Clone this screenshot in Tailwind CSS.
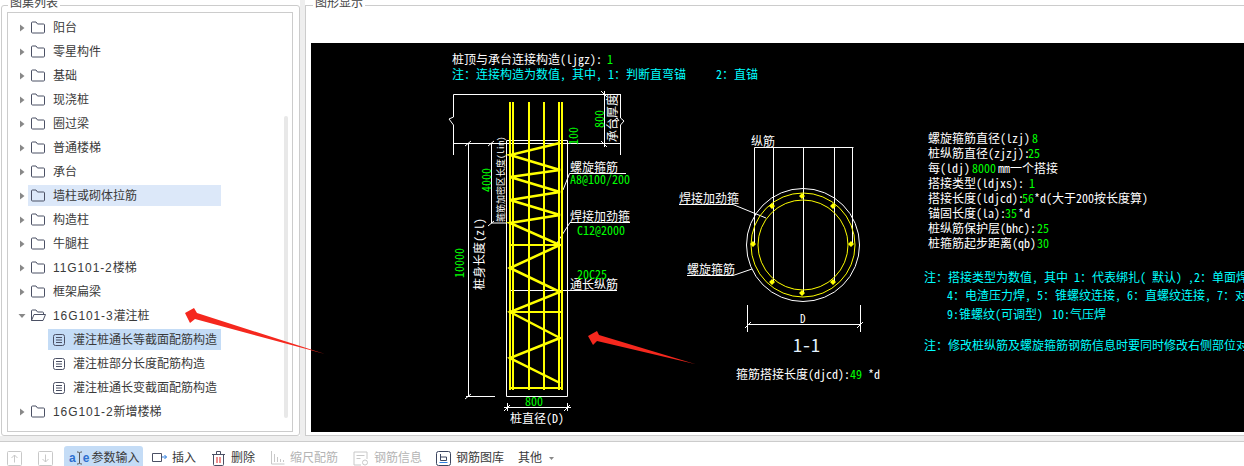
<!DOCTYPE html>
<html>
<head>
<meta charset="UTF-8">
<script src="https://cdn.jsdelivr.net/npm/@tailwindcss/browser@4"></script>
</head>
<body class="m-0 overflow-hidden">
<div class="relative w-[1244px] h-[466px] bg-[#eeeeee] overflow-hidden font-['Liberation_Sans','Noto_Sans_CJK_SC',sans-serif] text-[12px] text-[#3a3a3a]">
  <div class="h-[441px] flex">
    <!-- left panel -->
    <div class="relative w-[300px] h-[436px] bg-white pt-[5px] pl-[1px]">
      <span class="absolute left-[8px] -top-[4px] px-[2px] bg-white leading-[14px] text-[#444]">图集列表</span>
      <div class="w-[299px] h-[431px] border border-[#ccc] rounded-[3px] pt-[6px] pl-[5px]">
        <div class="relative w-[286px] h-[420px] border border-[#ccc] pt-[2.5px] pl-[10px]">
          <div class="absolute right-[4px] top-[103px] w-[4px] h-[302px] bg-[#e8e8e8] rounded-[2px]"></div>

          <div class="flex items-center h-[24px]"><svg class="w-[10px] h-[10px]" viewBox="0 0 10 10"><path d="M2 1.500l4.500 3.500-4.500 3.500z" fill="#888"/></svg><svg class="w-[14px] h-[13px] ml-[3px]" viewBox="0 0 14 13" fill="none" stroke="#4b5064"><path d="M.5 11V2a1 1 0 0 1 1-1h3.500l1.500 2h6a1 1 0 0 1 1 1v7a1 1 0 0 1-1 1h-11a1 1 0 0 1-1-1z"/></svg><span class="ml-[8px]">阳台</span></div>
          <div class="flex items-center h-[24px]"><svg class="w-[10px] h-[10px]" viewBox="0 0 10 10"><path d="M2 1.500l4.500 3.500-4.500 3.500z" fill="#888"/></svg><svg class="w-[14px] h-[13px] ml-[3px]" viewBox="0 0 14 13" fill="none" stroke="#4b5064"><path d="M.5 11V2a1 1 0 0 1 1-1h3.500l1.500 2h6a1 1 0 0 1 1 1v7a1 1 0 0 1-1 1h-11a1 1 0 0 1-1-1z"/></svg><span class="ml-[8px]">零星构件</span></div>
          <div class="flex items-center h-[24px]"><svg class="w-[10px] h-[10px]" viewBox="0 0 10 10"><path d="M2 1.500l4.500 3.500-4.500 3.500z" fill="#888"/></svg><svg class="w-[14px] h-[13px] ml-[3px]" viewBox="0 0 14 13" fill="none" stroke="#4b5064"><path d="M.5 11V2a1 1 0 0 1 1-1h3.500l1.500 2h6a1 1 0 0 1 1 1v7a1 1 0 0 1-1 1h-11a1 1 0 0 1-1-1z"/></svg><span class="ml-[8px]">基础</span></div>
          <div class="flex items-center h-[24px]"><svg class="w-[10px] h-[10px]" viewBox="0 0 10 10"><path d="M2 1.500l4.500 3.500-4.500 3.500z" fill="#888"/></svg><svg class="w-[14px] h-[13px] ml-[3px]" viewBox="0 0 14 13" fill="none" stroke="#4b5064"><path d="M.5 11V2a1 1 0 0 1 1-1h3.500l1.500 2h6a1 1 0 0 1 1 1v7a1 1 0 0 1-1 1h-11a1 1 0 0 1-1-1z"/></svg><span class="ml-[8px]">现浇桩</span></div>
          <div class="flex items-center h-[24px]"><svg class="w-[10px] h-[10px]" viewBox="0 0 10 10"><path d="M2 1.500l4.500 3.500-4.500 3.500z" fill="#888"/></svg><svg class="w-[14px] h-[13px] ml-[3px]" viewBox="0 0 14 13" fill="none" stroke="#4b5064"><path d="M.5 11V2a1 1 0 0 1 1-1h3.500l1.500 2h6a1 1 0 0 1 1 1v7a1 1 0 0 1-1 1h-11a1 1 0 0 1-1-1z"/></svg><span class="ml-[8px]">圈过梁</span></div>
          <div class="flex items-center h-[24px]"><svg class="w-[10px] h-[10px]" viewBox="0 0 10 10"><path d="M2 1.500l4.500 3.500-4.500 3.500z" fill="#888"/></svg><svg class="w-[14px] h-[13px] ml-[3px]" viewBox="0 0 14 13" fill="none" stroke="#4b5064"><path d="M.5 11V2a1 1 0 0 1 1-1h3.500l1.500 2h6a1 1 0 0 1 1 1v7a1 1 0 0 1-1 1h-11a1 1 0 0 1-1-1z"/></svg><span class="ml-[8px]">普通楼梯</span></div>
          <div class="flex items-center h-[24px]"><svg class="w-[10px] h-[10px]" viewBox="0 0 10 10"><path d="M2 1.500l4.500 3.500-4.500 3.500z" fill="#888"/></svg><svg class="w-[14px] h-[13px] ml-[3px]" viewBox="0 0 14 13" fill="none" stroke="#4b5064"><path d="M.5 11V2a1 1 0 0 1 1-1h3.500l1.500 2h6a1 1 0 0 1 1 1v7a1 1 0 0 1-1 1h-11a1 1 0 0 1-1-1z"/></svg><span class="ml-[8px]">承台</span></div>
          <div class="flex items-center h-[24px]"><svg class="w-[10px] h-[10px]" viewBox="0 0 10 10"><path d="M2 1.500l4.500 3.500-4.500 3.500z" fill="#888"/></svg><div class="flex items-center w-[193px] h-[21px] bg-[#dce8f9]"><svg class="w-[14px] h-[13px] ml-[3px]" viewBox="0 0 14 13" fill="none" stroke="#4b5064"><path d="M.5 11V2a1 1 0 0 1 1-1h3.500l1.500 2h6a1 1 0 0 1 1 1v7a1 1 0 0 1-1 1h-11a1 1 0 0 1-1-1z"/></svg><span class="ml-[8px]">墙柱或砌体拉筋</span></div></div>
          <div class="flex items-center h-[24px]"><svg class="w-[10px] h-[10px]" viewBox="0 0 10 10"><path d="M2 1.500l4.500 3.500-4.500 3.500z" fill="#888"/></svg><svg class="w-[14px] h-[13px] ml-[3px]" viewBox="0 0 14 13" fill="none" stroke="#4b5064"><path d="M.5 11V2a1 1 0 0 1 1-1h3.500l1.500 2h6a1 1 0 0 1 1 1v7a1 1 0 0 1-1 1h-11a1 1 0 0 1-1-1z"/></svg><span class="ml-[8px]">构造柱</span></div>
          <div class="flex items-center h-[24px]"><svg class="w-[10px] h-[10px]" viewBox="0 0 10 10"><path d="M2 1.500l4.500 3.500-4.500 3.500z" fill="#888"/></svg><svg class="w-[14px] h-[13px] ml-[3px]" viewBox="0 0 14 13" fill="none" stroke="#4b5064"><path d="M.5 11V2a1 1 0 0 1 1-1h3.500l1.500 2h6a1 1 0 0 1 1 1v7a1 1 0 0 1-1 1h-11a1 1 0 0 1-1-1z"/></svg><span class="ml-[8px]">牛腿柱</span></div>
          <div class="flex items-center h-[24px]"><svg class="w-[10px] h-[10px]" viewBox="0 0 10 10"><path d="M2 1.500l4.500 3.500-4.500 3.500z" fill="#888"/></svg><svg class="w-[14px] h-[13px] ml-[3px]" viewBox="0 0 14 13" fill="none" stroke="#4b5064"><path d="M.5 11V2a1 1 0 0 1 1-1h3.500l1.500 2h6a1 1 0 0 1 1 1v7a1 1 0 0 1-1 1h-11a1 1 0 0 1-1-1z"/></svg><span class="ml-[8px]"><span class="tracking-[0.9px]">11G101-2</span>楼梯</span></div>
          <div class="flex items-center h-[24px]"><svg class="w-[10px] h-[10px]" viewBox="0 0 10 10"><path d="M2 1.500l4.500 3.500-4.500 3.500z" fill="#888"/></svg><svg class="w-[14px] h-[13px] ml-[3px]" viewBox="0 0 14 13" fill="none" stroke="#4b5064"><path d="M.5 11V2a1 1 0 0 1 1-1h3.500l1.500 2h6a1 1 0 0 1 1 1v7a1 1 0 0 1-1 1h-11a1 1 0 0 1-1-1z"/></svg><span class="ml-[8px]">框架扁梁</span></div>
          <div class="flex items-center h-[24px]"><svg class="w-[10px] h-[10px]" viewBox="0 0 10 10"><path d="M.5 3h7l-3.500 4z" fill="#888"/></svg><svg class="w-[15px] h-[13px] ml-[3px]" viewBox="0 0 15 13" fill="none" stroke="#4b5064"><path d="M.5 11.500V2a1 1 0 0 1 1-1h3.500l1.500 2h5a1 1 0 0 1 1 1v1.500M.5 11.500l2.500-6h11.500l-2.500 6z"/></svg><span class="ml-[7px]"><span class="tracking-[0.9px]">16G101-3</span>灌注桩</span></div>

          <div class="flex items-center h-[24px] pl-[30px]"><div class="flex items-center w-[173px] h-[21px] bg-[#c4dcf6]"><svg class="w-[12px] h-[12px] ml-[5px]" viewBox="0 0 12 12" fill="none" stroke="#4b5064"><rect x=".5" y=".5" width="11" height="11" rx="2"/><path d="M3 3.500h6M3 6h6M3 8.500h6"/></svg><span class="ml-[8px]">灌注桩通长等截面配筋构造</span></div></div>
          <div class="flex items-center h-[24px] pl-[30px]"><svg class="w-[12px] h-[12px] ml-[5px]" viewBox="0 0 12 12" fill="none" stroke="#4b5064"><rect x=".5" y=".5" width="11" height="11" rx="2"/><path d="M3 3.500h6M3 6h6M3 8.500h6"/></svg><span class="ml-[8px]">灌注桩部分长度配筋构造</span></div>
          <div class="flex items-center h-[24px] pl-[30px]"><svg class="w-[12px] h-[12px] ml-[5px]" viewBox="0 0 12 12" fill="none" stroke="#4b5064"><rect x=".5" y=".5" width="11" height="11" rx="2"/><path d="M3 3.500h6M3 6h6M3 8.500h6"/></svg><span class="ml-[8px]">灌注桩通长变截面配筋构造</span></div>
          <div class="flex items-center h-[24px]"><svg class="w-[10px] h-[10px]" viewBox="0 0 10 10"><path d="M2 1.500l4.500 3.500-4.500 3.500z" fill="#888"/></svg><svg class="w-[14px] h-[13px] ml-[3px]" viewBox="0 0 14 13" fill="none" stroke="#4b5064"><path d="M.5 11V2a1 1 0 0 1 1-1h3.500l1.500 2h6a1 1 0 0 1 1 1v7a1 1 0 0 1-1 1h-11a1 1 0 0 1-1-1z"/></svg><span class="ml-[8px]"><span class="tracking-[0.9px]">16G101-2</span>新增楼梯</span></div>
        </div>
      </div>
    </div>

    <!-- right panel -->
    <div class="relative flex-1 ml-[5px] h-[436px] bg-white pt-[5px]">
      <span class="absolute left-[8px] -top-[4px] px-[2px] bg-white leading-[14px] text-[#444]">图形显示</span>
      <div class="h-[431px] border-l border-t border-b border-[#ccc] pt-[37px] pl-[5px]">
        <svg class="block w-[934px] h-[389px] bg-black whitespace-pre [font-feature-settings:'hwid']" viewBox="311 43 934 389" font-family="'Noto Sans CJK SC',sans-serif" font-size="12">
          <!-- top notes -->
          <text x="452" y="64" fill="#fff">桩顶与承台连接构造(ljgz):<tspan x="607" fill="#00ff00">1</tspan></text>
          <text x="452" y="79" fill="#00ffff">注<tspan x="464">：</tspan><tspan x="476">连接构造为数值</tspan><tspan x="560">，</tspan><tspan x="572">其中</tspan><tspan x="596">，</tspan><tspan x="608">1</tspan><tspan x="614">：</tspan><tspan x="626">判断直弯锚</tspan><tspan x="716">2</tspan><tspan x="722">：</tspan><tspan x="734">直锚</tspan></text>

          <!-- cap outline -->
          <g fill="none" stroke="#fff">
            <path d="M453.500 94.500H620M453.500 143.500H620M453.500 94.500V117L449 119L453.500 125V155"/>
            <path d="M604.500 91V147M620.500 94V118L624 121L620.500 125V155M601 91l6 6M601 141l6 6M612 122l5-4 2 3"/>
            <path d="M506.500 140.500V396.500H567.500V140.500H506.500M468.500 143.500V396.500M466 396.500H495M465 399l6-5M478 143.500H506M465 146l6-5M488 146l6-5M491.500 143.500V223M488 226l6-5M491 223H506"/>
            <path d="M507.500 403V411M567.500 403V411M504 407.500H571M504 411l6-6M564 411l6-6"/>
            <path d="M569.500 173.500H626M569.500 173.500L563 190M570 222.500H630M570 222.500L557 243M510 290.500H617"/>
          </g>
          <!-- pile rebars -->
          <g fill="none" stroke="#ffff00" stroke-width="2">
            <path d="M510 102V390M513 102V390M529 102V390M544 102V390M559 102V390M562 102V390"/>
            <path d="M510 245H562M510 312H562M510 388H562"/>
            <polyline stroke-width="2.500" points="560,143 510,155 560,170 510,177 560,192 510,200 560,215 510,223 560,245 510,268 560,292 510,312 560,338 510,358 560,383"/>
          </g>
          <!-- labels -->
          <g fill="#fff">
            <text x="570" y="172">螺旋箍筋</text>
            <text x="570" y="221">焊接加劲箍</text>
            <text x="570" y="289">通长纵筋</text>
            <text x="510" y="423">桩直径(D)</text>
            <text transform="translate(484 290) rotate(-90)">桩身长度(zl)</text>
            <text transform="translate(504 222) rotate(-90)" font-size="9">箍筋加密区长度(lim)</text>
            <text transform="translate(617 142) rotate(-90)">承台厚度</text>
          </g>
          <g fill="#00ff00">
            <text x="570" y="184">A8@100/200</text>
            <text x="577" y="235">C12@2000</text>
            <text x="577" y="279">20C25</text>
            <text x="525" y="406">800</text>
            <text transform="translate(604 128) rotate(-90)">800</text>
            <text transform="translate(578 145) rotate(-90)">100</text>
            <text transform="translate(491 192) rotate(-90)">4000</text>
            <text transform="translate(464 278) rotate(-90)">10000</text>
          </g>

          <!-- section 1-1 -->
          <g fill="none" stroke="#fff">
            <path d="M754.500 147.500H853.500M754.500 147.500V244M773.500 147.500V283M803.500 147.500V293M834.500 147.500V283M852.500 147.500V244"/>
            <circle cx="803" cy="245" r="56.500"/>
            <path d="M679 204.500H733L766 218M687 275.500H733L752 269"/>
            <path d="M747.500 305V332M860.500 305V332M747.500 324.500H860.500M745 328l6-6M857 328l6-6"/>
          </g>
          <g fill="none" stroke="#ffff00">
            <circle cx="803" cy="245" r="52"/>
            <circle cx="803" cy="245" r="45"/>
          </g>
          <g fill="#ffff00">
            <path d="M802 193l3 3-3 3-3-3zM772 203l3 3-3 3-3-3zM833 203l3 3-3 3-3-3zM753 241l3 3-3 3-3-3zM851 241l3 3-3 3-3-3zM772 279l3 3-3 3-3-3zM833 279l3 3-3 3-3-3zM802 290l3 3-3 3-3-3z"/>
          </g>
          <g fill="#fff">
            <text x="751" y="146">纵筋</text>
            <text x="679" y="203">焊接加劲箍</text>
            <text x="687" y="274">螺旋箍筋</text>
            <text x="800" y="323" font-size="11">D</text>
            <text x="793" y="352" font-size="18" fill="#e4f2ff">1-1</text>
            <text x="736" y="379">箍筋搭接长度(djcd):<tspan fill="#00ff00">49</tspan> *d</text>
          </g>

          <!-- parameter block -->
          <g fill="#fff">
            <text x="928" y="143">螺旋箍筋直径(lzj)<tspan x="1032" fill="#00ff00">8</tspan></text>
            <text x="928" y="158">桩纵筋直径(zjzj):<tspan x="1028" fill="#00ff00">25</tspan></text>
            <text x="928" y="173">每(ldj)<tspan x="972" fill="#00ff00">8000</tspan><tspan x="998">mm一个搭接</tspan></text>
            <text x="928" y="188">搭接类型(ldjxs):<tspan x="1029" fill="#00ff00">1</tspan></text>
            <text x="928" y="203">搭接长度(ldjcd):<tspan x="1022" fill="#00ff00">56</tspan>*d(大于200按长度算)</text>
            <text x="928" y="218">锚固长度(la):<tspan x="1005" fill="#00ff00">35</tspan><tspan x="1018">*d</tspan></text>
            <text x="928" y="233">桩纵筋保护层(bhc):<tspan x="1037" fill="#00ff00">25</tspan></text>
            <text x="928" y="248">桩箍筋起步距离(qb)<tspan x="1037" fill="#00ff00">30</tspan></text>
          </g>
          <g fill="#00ffff">
            <text x="924" y="282">注<tspan x="936">：</tspan><tspan x="948">搭接类型为数值</tspan><tspan x="1032">，</tspan><tspan x="1044">其中</tspan><tspan x="1074">1</tspan><tspan x="1080">：</tspan><tspan x="1092">代表绑扎</tspan><tspan x="1140">（</tspan><tspan x="1152">默认</tspan><tspan x="1176">）</tspan><tspan x="1188">,2</tspan><tspan x="1200">：</tspan><tspan x="1212">单面焊</tspan></text>
            <text x="947" y="300">4<tspan x="953">：</tspan><tspan x="965">电渣压力焊</tspan><tspan x="1025">，</tspan><tspan x="1037">5</tspan><tspan x="1043">：</tspan><tspan x="1055">锥螺纹连接</tspan><tspan x="1115">，</tspan><tspan x="1127">6</tspan><tspan x="1133">：</tspan><tspan x="1145">直螺纹连接</tspan><tspan x="1205">，</tspan><tspan x="1217">7</tspan><tspan x="1223">：</tspan><tspan x="1235">对</tspan></text>
            <text x="947" y="319">9:锥螺纹(可调型)<tspan x="1052">10:气压焊</tspan></text>
            <text x="924" y="350">注<tspan x="936">：</tspan><tspan x="948">修改桩纵筋及螺旋箍筋钢筋信息时要同时修改右侧部位对</tspan></text>
          </g>
        </svg>
      </div>
    </div>
  </div>

  <!-- toolbar -->
  <div class="flex items-center h-[25px] pt-[8px] border-t border-[#ccc] bg-white overflow-hidden">
    <svg class="w-[15px] h-[15px] ml-[7px] shrink-0" viewBox="0 0 15 15" fill="none" stroke="#c8c8c8"><rect x=".5" y=".5" width="14" height="14" rx="1"/><path d="M7.500 11.500V4M4.500 7l3-3 3 3"/></svg>
    <svg class="w-[15px] h-[15px] ml-[16px] shrink-0" viewBox="0 0 15 15" fill="none" stroke="#c8c8c8"><rect x=".5" y=".5" width="14" height="14" rx="1"/><path d="M7.500 3.500V11M4.500 8l3 3 3-3"/></svg>
    <div class="flex items-center h-[24px] ml-[11px] w-[79px] pl-[5px] bg-[#c4dcf6] rounded-t-[3px] shrink-0">
      <span class="text-[#2d6fd0] font-bold text-[12px] leading-none">a</span><svg class="w-[7px] h-[14px]" viewBox="0 0 7 14" fill="none" stroke="#555"><path d="M1 1h1.500l1 1 1-1H6M3.500 2v10M1 13h1.500l1-1 1 1H6"/></svg><span class="text-[#2d6fd0] font-bold text-[12px] leading-none">e</span><span class="ml-[2px]">参数输入</span>
    </div>
    <svg class="w-[15px] h-[12px] ml-[9px] shrink-0" viewBox="0 0 15 12" fill="none"><path d="M.5 1.500h9v8h-9z" stroke="#4b5064"/><path d="M10 5h4.500M12.500 3l2 2-2 2" stroke="#2d7fe0"/></svg>
    <span class="ml-[5px] shrink-0">插入</span>
    <svg class="w-[13px] h-[15px] ml-[16px] shrink-0" viewBox="0 0 13 15" fill="none"><path d="M1.500 3.500h10v10a1 1 0 0 1-1 1h-8a1 1 0 0 1-1-1zM0 3.500h13M4.500 3V.5h4V3" stroke="#4b5064"/><path d="M5 6v6M8 6v6" stroke="#e02020"/></svg>
    <span class="ml-[6px] shrink-0">删除</span>
    <svg class="w-[14px] h-[14px] ml-[16px] shrink-0" viewBox="0 0 14 14" fill="none" stroke="#c8c8c8"><path d="M.5 0v13h13M3.500 3v8M6.500 6v5M9.500 8v3M12.500 9v2"/></svg>
    <span class="ml-[5px] shrink-0 text-[#b4b4b4]">缩尺配筋</span>
    <svg class="w-[16px] h-[15px] ml-[15px] shrink-0" viewBox="0 0 16 15" fill="none" stroke="#c8c8c8"><path d="M8 14H1V1h13v7M3.500 4.500h8M3.500 7.500h4"/><circle cx="12" cy="11.500" r="2.500"/></svg>
    <span class="ml-[5px] shrink-0 text-[#b4b4b4]">钢筋信息</span>
    <svg class="w-[15px] h-[15px] ml-[14px] shrink-0" viewBox="0 0 15 15" fill="none"><rect x=".5" y=".5" width="14" height="14" rx="2" stroke="#3c4660"/><path d="M4.500 3v6.500h6V6h-6" stroke="#3c4660"/><path d="M3.500 11.500h8" stroke="#2d7fe0"/></svg>
    <span class="ml-[5px] shrink-0">钢筋图库</span>
    <span class="ml-[14px] shrink-0">其他</span>
    <svg class="w-[5px] h-[3px] ml-[7px] shrink-0" viewBox="0 0 5 3"><path d="M0 0h5L2.500 3z" fill="#888"/></svg>
  </div>

  <!-- red annotation arrows, drawn over both panels -->
  <svg class="absolute left-0 top-0 w-[1244px] h-[466px] pointer-events-none" viewBox="0 0 1244 466">
    <path d="M185 313L194 308L197 313L325 354L195 319L190 323z" fill="#f5281e"/>
    <path d="M588 336L597 331L599 335L695 364L597 341L593 345z" fill="#f5281e"/>
  </svg>
</div>
</body>
</html>
